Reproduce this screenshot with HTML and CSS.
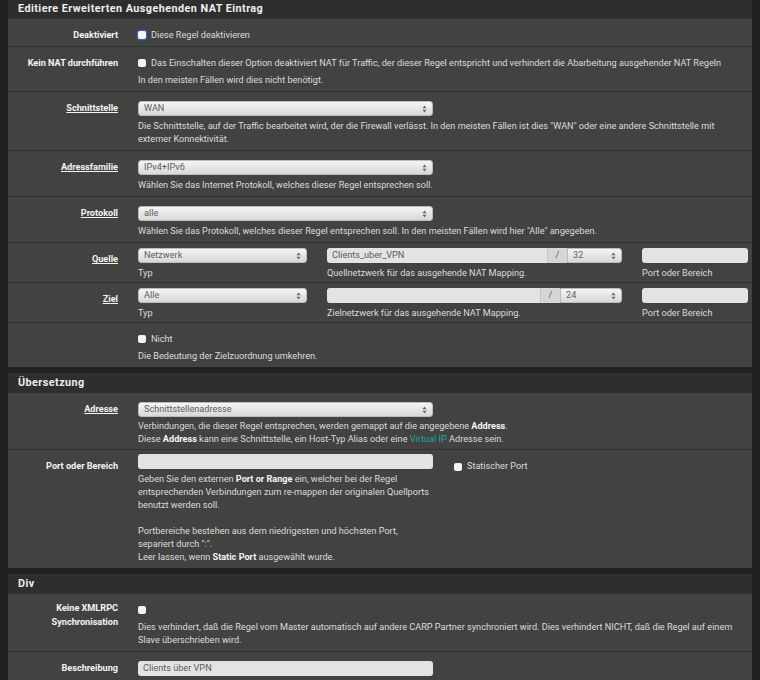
FILE: index.html
```html
<!DOCTYPE html>
<html lang="de">
<head>
<meta charset="utf-8">
<title>NAT</title>
<link rel="stylesheet" href="styles.css">
</head>
<body>
<div class="panel first">
  <div class="panel-heading">Editiere Erweiterten Ausgehenden NAT Eintrag</div>

  <div class="row">
    <div class="label">Deaktiviert</div>
    <div class="content">
      <div class="check-line"><span class="cb focus"></span>Diese Regel deaktivieren</div>
    </div>
  </div>

  <div class="row">
    <div class="label">Kein NAT durchführen</div>
    <div class="content">
      <div class="check-line"><span class="cb"></span>Das Einschalten dieser Option deaktiviert NAT für Traffic, der dieser Regel entspricht und verhindert die Abarbeitung ausgehender NAT Regeln</div>
      <div class="help">In den meisten Fällen wird dies nicht benötigt.</div>
    </div>
  </div>

  <div class="row">
    <div class="label"><a>Schnittstelle</a></div>
    <div class="content">
      <div class="select w-main"><span>WAN</span><svg class="arrows" viewBox="0 0 6 10"><path d="M3 0.5L5.6 4H0.4Z M0.4 6H5.6L3 9.5Z"/></svg></div>
      <div class="help">Die Schnittstelle, auf der Traffic bearbeitet wird, der die Firewall verlässt. In den meisten Fällen ist dies "WAN" oder eine andere Schnittstelle mit externer Konnektivität.</div>
    </div>
  </div>

  <div class="row">
    <div class="label"><a>Adressfamilie</a></div>
    <div class="content">
      <div class="select w-main"><span>IPv4+IPv6</span><svg class="arrows" viewBox="0 0 6 10"><path d="M3 0.5L5.6 4H0.4Z M0.4 6H5.6L3 9.5Z"/></svg></div>
      <div class="help">Wählen Sie das Internet Protokoll, welches dieser Regel entsprechen soll.</div>
    </div>
  </div>

  <div class="row">
    <div class="label"><a>Protokoll</a></div>
    <div class="content">
      <div class="select w-main"><span>alle</span><svg class="arrows" viewBox="0 0 6 10"><path d="M3 0.5L5.6 4H0.4Z M0.4 6H5.6L3 9.5Z"/></svg></div>
      <div class="help">Wählen Sie das Protokoll, welches dieser Regel entsprechen soll. In den meisten Fällen wird hier "Alle" angegeben.</div>
    </div>
  </div>

  <div class="row tight">
    <div class="label"><a>Quelle</a></div>
    <div class="content cols3">
      <div>
        <div class="select"><span>Netzwerk</span><svg class="arrows" viewBox="0 0 6 10"><path d="M3 0.5L5.6 4H0.4Z M0.4 6H5.6L3 9.5Z"/></svg></div>
        <div class="help">Typ</div>
      </div>
      <div>
        <div class="ig">
          <div class="inp"><span>Clients_uber_VPN</span></div>
          <div class="addon">/</div>
          <div class="select mask m32"><span>32</span><svg class="arrows" viewBox="0 0 6 10"><path d="M3 0.5L5.6 4H0.4Z M0.4 6H5.6L3 9.5Z"/></svg></div>
        </div>
        <div class="help">Quellnetzwerk für das ausgehende NAT Mapping.</div>
      </div>
      <div>
        <div class="inp"></div>
        <div class="help">Port oder Bereich</div>
      </div>
    </div>
  </div>

  <div class="row tight">
    <div class="label"><a>Ziel</a></div>
    <div class="content cols3">
      <div>
        <div class="select"><span>Alle</span><svg class="arrows" viewBox="0 0 6 10"><path d="M3 0.5L5.6 4H0.4Z M0.4 6H5.6L3 9.5Z"/></svg></div>
        <div class="help">Typ</div>
      </div>
      <div>
        <div class="ig">
          <div class="inp"></div>
          <div class="addon">/</div>
          <div class="select mask m24"><span>24</span><svg class="arrows" viewBox="0 0 6 10"><path d="M3 0.5L5.6 4H0.4Z M0.4 6H5.6L3 9.5Z"/></svg></div>
        </div>
        <div class="help">Zielnetzwerk für das ausgehende NAT Mapping.</div>
      </div>
      <div>
        <div class="inp"></div>
        <div class="help">Port oder Bereich</div>
      </div>
    </div>
  </div>

  <div class="row">
    <div class="label"></div>
    <div class="content">
      <div class="check-line"><span class="cb"></span>Nicht</div>
      <div class="help">Die Bedeutung der Zielzuordnung umkehren.</div>
    </div>
  </div>
</div>

<div class="panel">
  <div class="panel-heading">Übersetzung</div>

  <div class="row addr">
    <div class="label"><a>Adresse</a></div>
    <div class="content">
      <div class="select w-main"><span>Schnittstellenadresse</span><svg class="arrows" viewBox="0 0 6 10"><path d="M3 0.5L5.6 4H0.4Z M0.4 6H5.6L3 9.5Z"/></svg></div>
      <div class="help">Verbindungen, die dieser Regel entsprechen, werden gemappt auf die angegebene <b>Address</b>.<br>Diese <b>Address</b> kann eine Schnittstelle, ein Host-Typ Alias oder eine <a class="link">Virtual IP</a> Adresse sein.</div>
    </div>
  </div>

  <div class="row port">
    <div class="label">Port oder Bereich</div>
    <div class="content cols2">
      <div>
        <div class="inp"></div>
        <div class="help">Geben Sie den externen <b>Port or Range</b> ein, welcher bei der Regel entsprechenden Verbindungen zum re-mappen der originalen Quellports benutzt werden soll.<br><br>Portbereiche bestehen aus dem niedrigesten und höchsten Port, separiert durch ":".<br>Leer lassen, wenn <b>Static Port</b> ausgewählt wurde.</div>
      </div>
      <div class="static">
        <div class="check-line"><span class="cb"></span>Statischer Port</div>
      </div>
    </div>
  </div>
</div>

<div class="panel">
  <div class="panel-heading">Div</div>

  <div class="row">
    <div class="label two">Keine XMLRPC<br>Synchronisation</div>
    <div class="content">
      <div class="check-line"><span class="cb"></span></div>
      <div class="help">Dies verhindert, daß die Regel vom Master automatisch auf andere CARP Partner synchroniert wird. Dies verhindert NICHT, daß die Regel auf einem Slave überschrieben wird.</div>
    </div>
  </div>

  <div class="row">
    <div class="label">Beschreibung</div>
    <div class="content">
      <div class="inp w-main"><span>Clients über VPN</span></div>
    </div>
  </div>
</div>
</body>
</html>
```

FILE: styles.css
```css
* { box-sizing: border-box; }

html, body {
  background: #212121;
}

body {
  margin: 0 8px 40px;
  font-family: Roboto, "Liberation Sans", sans-serif;
  font-size: 9.15px;
  color: #dcdcdc;
}

.panel {
  background: #424242;
  margin-top: 6px;
}

.panel.first {
  margin-top: -1px;
}

.panel-heading {
  background: #2e2e2e;
  height: 19px;
  line-height: 19px;
  padding-left: 10px;
  font-weight: 700;
  font-size: 10.8px;
  letter-spacing: 0.45px;
  color: #eeeeee;
}

.row {
  display: grid;
  grid-template-columns: 110px 1fr;
  column-gap: 20px;
  border-top: 1px solid #303030;
  padding-right: 4px;
}

.label {
  text-align: right;
  font-weight: 700;
  color: #f4f4f4;
  padding-top: 9px;
  line-height: 15px;
}

.label.two {
  padding-top: 7px;
  line-height: 14px;
}

.label a {
  color: inherit;
  text-decoration: underline;
  text-underline-offset: 1px;
}

.content {
  padding: 9px 0 4px;
  line-height: 13px;
  min-width: 0;
}

.tight .content {
  padding: 5px 0 2px;
}

.addr .content {
  padding: 9px 0 3px;
}

.addr .help {
  margin-top: 3px;
}

.port .content {
  padding: 4px 0 4px;
}

.check-line {
  display: flex;
  align-items: center;
  height: 14px;
  white-space: nowrap;
}

.cb {
  width: 8px;
  height: 8px;
  flex: none;
  background: #f3f3f3;
  border-radius: 2px;
  margin-right: 5px;
}

.cb.focus {
  box-shadow: 0 0 0 1.3px #3d5fa3;
  background: #f6f6f6;
}

.help {
  margin-top: 4px;
}

.help b {
  color: #f6f6f6;
}

.port .help {
  margin-top: 4px;
}

.link {
  color: #1fa89a;
}

.select {
  display: flex;
  align-items: center;
  justify-content: space-between;
  height: 15px;
  border-radius: 3px;
  background: linear-gradient(#f5f5f5, #d8d8d8);
  border: 1px solid #bcbcbc;
  padding: 0 5px 0 5px;
  color: #5e5e5e;
  line-height: 13px;
}

.arrows {
  width: 5px;
  height: 8px;
  fill: #6a6a6a;
  flex: none;
}

.w-main {
  width: 295px;
}

.inp {
  height: 15px;
  border-radius: 3px;
  background: #e3e3e3;
  color: #5a5a5a;
  padding: 0 5px;
  line-height: 15px;
}

.cols3 {
  display: grid;
  grid-template-columns: 169px 295px 106px;
  column-gap: 20px;
}

.ig {
  display: flex;
}

.ig .inp {
  flex: 1;
  border-radius: 3px 0 0 3px;
}

.addon {
  width: 20px;
  height: 15px;
  background: #d6d6d6;
  color: #555;
  text-align: center;
  line-height: 15px;
  border-left: 1px solid #c4c4c4;
}

.ig .select {
  border-radius: 0 3px 3px 0;
}

.m32 { width: 55px; }
.m24 { width: 62px; }

.cols2 {
  display: grid;
  grid-template-columns: 295px 1fr;
  column-gap: 21px;
}

.static {
  padding-top: 5px;
}

.static .check-line {
  height: 15px;
}
```
